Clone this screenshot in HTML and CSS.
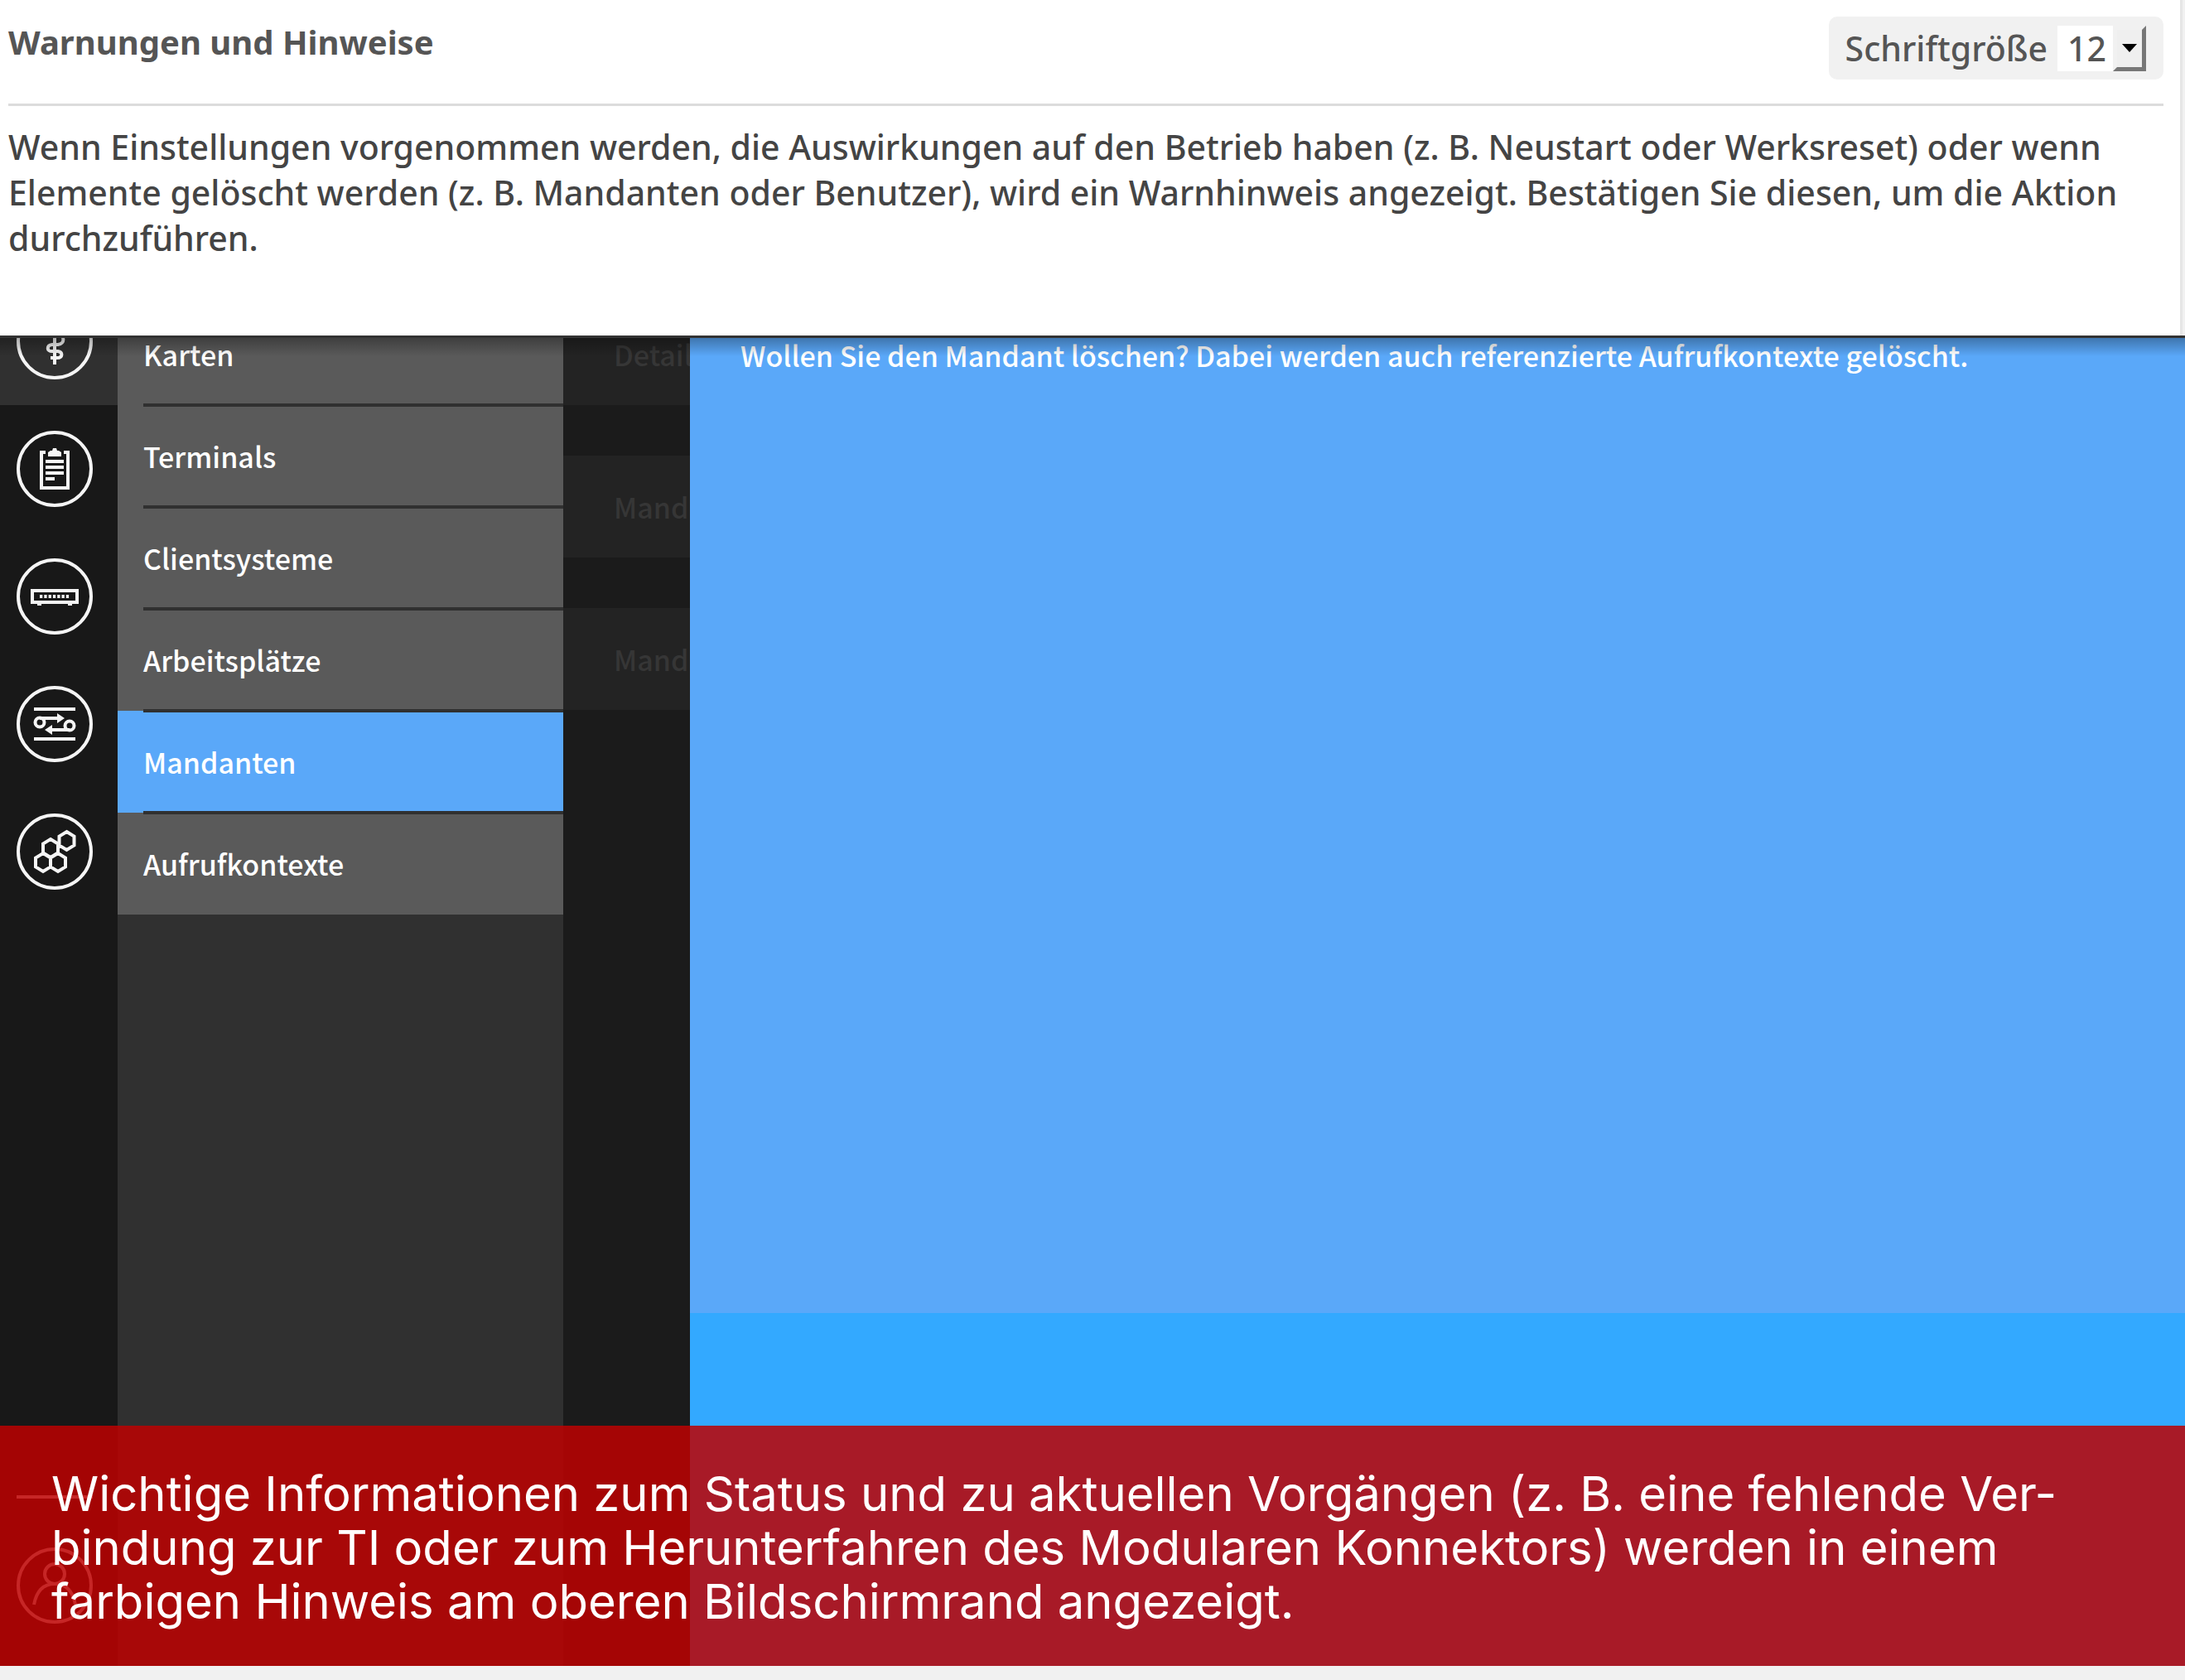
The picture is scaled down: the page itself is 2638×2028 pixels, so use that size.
FILE: index.html
```html
<!DOCTYPE html>
<html lang="de">
<head>
<meta charset="utf-8">
<title>Warnungen und Hinweise</title>
<link rel="stylesheet" href="styles.css">
</head>
<body>
<div class="page">
  <header class="intro">
    <div class="intro-head">
      <h1 class="intro-title">Warnungen und Hinweise</h1>
      <div class="font-size">
        <label for="font-size">Schriftgröße</label>
        <div class="picker">
          <select id="font-size" class="picker-select"><option>10</option><option selected>12</option><option>14</option></select>
          <span class="picker-arrow" aria-hidden="true"><svg width="18" height="10" viewBox="0 0 18 10"><path d="M0 0h18L9 10z"/></svg></span>
        </div>
      </div>
    </div>
    <p class="intro-text">Wenn Einstellungen vorgenommen werden, die Auswirkungen auf den Betrieb haben (z. B. Neustart oder Werksreset) oder wenn<br>Elemente gelöscht werden (z. B. Mandanten oder Benutzer), wird ein Warnhinweis angezeigt. Bestätigen Sie diesen, um die Aktion<br>durchzuführen.</p>
  </header>

  <main class="screen">
    <nav class="rail" aria-label="Bereiche">
      <a class="rail-item rail-item-active" href="#praxis" aria-label="Praxis"><svg class="icon" viewBox="-47 -47 94 94"><circle r="44"/><path d="M0-28V28M4-8C12-8 13 3 4 4H-3C-10 5-10 12-3 12H4C10 13 10 20 3 20H-5"/></svg></a>
      <a class="rail-item" href="#diagnose" aria-label="Diagnose"><svg class="icon" viewBox="-47 -47 94 94"><circle r="44"/><path d="M-11-20H-16V23H16V-20H11M-11-9H11M-11-2H11M-11 5H11M-11 12H0"/><path class="solid" d="M-8-15V-20L-5-22H-3L-2-25H2L3-22H5L8-20V-15z"/></svg></a>
      <a class="rail-item" href="#system" aria-label="System"><svg class="icon" viewBox="-47 -47 94 94"><circle r="44"/><path d="M-27-7H27V7H-27z"/><path d="M-18 0H19" stroke-dasharray="3.3 2"/><path class="solid" d="M-21 8h5v3h-5zM16 8h5v3h-5z"/></svg></a>
      <a class="rail-item" href="#netzwerk" aria-label="Netzwerk"><svg class="icon" viewBox="-47 -47 94 94"><circle r="44"/><path d="M-25-18H25M-25 18H25M-18-7H5M18 7H-5"/><circle cx="-18" cy="-2" r="5.5"/><circle cx="18" cy="2" r="5.5"/><path class="solid" d="M3-13L12-7L3-1zM-3 1L-12 7L-3 13z"/></svg></a>
      <a class="rail-item" href="#module" aria-label="Module"><svg class="icon" viewBox="-47 -47 94 94"><circle r="44"/><path d="M-14 2l9 5.500v11l-9 5.500l-9-5.500v-11zM4 2l9 5.500v11l-9 5.500l-9-5.500v-11zM-5-15l9 5.500v11l-9 5.500l-9-5.500v-11zM14.500-24l9 5.500v11l-9 5.500l-9-5.500v-11z"/></svg></a>
      <div class="rail-foot">
        <a class="rail-item" href="#konto" aria-label="Benutzerkonto"><svg class="icon" viewBox="-47 -47 94 94"><circle r="44"/><circle cy="-14" r="12"/><path d="M-25 23C-22 7-14-2 0-2S22 7 25 23"/></svg></a>
      </div>
    </nav>

    <nav class="menu" aria-label="Praxis">
      <a class="menu-item menu-item-cut" href="#karten">Karten</a>
      <a class="menu-item" href="#terminals">Terminals</a>
      <a class="menu-item" href="#clientsysteme">Clientsysteme</a>
      <a class="menu-item" href="#arbeitsplaetze">Arbeitsplätze</a>
      <a class="menu-item menu-item-active" href="#mandanten" aria-current="page">Mandanten</a>
      <a class="menu-item" href="#aufrufkontexte">Aufrufkontexte</a>
    </nav>

    <div class="details">
      <div class="details-row details-row-cut">Details</div>
      <div class="details-row">Mandant</div>
      <div class="details-row">Mandant</div>
    </div>

    <section class="dialog">
      <p class="dialog-text">Wollen Sie den Mandant löschen? Dabei werden auch referenzierte Aufrufkontexte gelöscht.</p>
      <div class="dialog-foot"></div>
    </section>

    <p class="notice">Wichtige Informationen zum Status und zu aktuellen Vorgängen (z. B. eine fehlende Ver-<br>bindung zur TI oder zum Herunterfahren des Modularen Konnektors) werden in einem<br>farbigen Hinweis am oberen Bildschirmrand angezeigt.</p>
  </main>
</div>
</body>
</html>
```
FILE: styles.css
```css
* { box-sizing: border-box; }

body {
  margin: 0;
  background: #f1f1f1;
  font-family: "Noto Sans", sans-serif;
}

.page {
  display: flex;
  flex-direction: column;
  min-height: 100vh;
  padding-bottom: 17px;
}

/* Intro */
.intro {
  margin-right: 3px;
  padding: 20px 20px 90px 10px;
  border-right: 3px solid #e6e6e6;
  background: #fff;
  color: #444;
}

.intro-head {
  display: flex;
  justify-content: space-between;
  align-items: flex-start;
  height: 108px;
  border-bottom: 3px solid #dcdcdc;
}

.intro-title {
  margin: 0;
  color: #555;
  font-size: 40px;
  line-height: 62px;
}

.font-size {
  display: flex;
  align-items: center;
  gap: 12px;
  height: 76px;
  padding: 0 21px 0 20px;
  border-radius: 10px;
  background: #f1f1f1;
  color: #555;
  font-size: 41px;
  font-weight: 500;
  line-height: 54px;
}

.picker {
  display: grid;
  width: 107px;
  height: 55px;
}

.picker-select {
  grid-area: 1 / 1;
  appearance: none;
  padding: 0 0 0 12px;
  border: 0;
  border-radius: 0;
  background: #fff;
  color: #555;
  font: inherit;
}

.picker-arrow {
  grid-area: 1 / 1;
  justify-self: end;
  display: grid;
  place-items: center;
  width: 40px;
  border: 5px solid #f1f1f1;
  border-right-color: #777;
  border-bottom-color: #777;
  background: #efefef;
  pointer-events: none;
}

.intro-text {
  margin: 0;
  padding-top: 22px;
  font-size: 41px;
  font-weight: 500;
  line-height: 55px;
  white-space: nowrap;
}

/* Application screen */
.screen {
  position: relative;
  flex: 1;
  display: grid;
  grid-template-columns: 142px 538px 153px 1fr;
  overflow: hidden;
  background: #1b1b1b;
  font-family: "Noto Sans CJK SC", sans-serif;
  font-size: 34px;
  font-weight: 500;
  line-height: 48px;
}

.screen::before {
  content: "";
  position: absolute;
  inset: 0 0 auto;
  height: 22px;
  border-top: 3px solid #333;
  background: linear-gradient(rgba(0, 0, 0, .3), rgba(0, 0, 0, 0));
  z-index: 1;
}

.rail {
  display: flex;
  flex-direction: column;
  background: #181818;
}

.rail-item {
  display: flex;
  align-items: center;
  height: 154px;
  padding-left: 19px;
}

.rail-item-active {
  align-items: flex-end;
  height: 84px;
  padding-bottom: 30px;
  overflow: hidden;
  background: #303030;
}

.icon {
  flex: none;
  width: 94px;
  height: 94px;
  fill: none;
  stroke: #f5f5f5;
  stroke-width: 4;
}

.icon .solid { fill: #f5f5f5; stroke: none; }

.rail-foot { margin: auto 30px 20px 0; }

.rail-foot::before {
  content: "";
  display: block;
  height: 4px;
  margin: 0 0 28px 20px;
  background: #f5f5f5;
}

.menu { background: #303030; }

.menu-item {
  position: relative;
  display: flex;
  align-items: center;
  height: 123px;
  padding-left: 31px;
  background: #5a5a5a;
  color: #fff;
  text-decoration: none;
}

.menu-item-cut,
.details-row-cut {
  height: 84px;
}

.menu-item-cut { padding-bottom: 39px; }

.menu-item-active { background: #5aa8f9; }

.menu-item + .menu-item::before {
  content: "";
  position: absolute;
  top: -2px;
  left: 31px;
  right: 0;
  height: 4px;
  background: #303030;
}

.details { overflow: hidden; }

.details-row {
  display: flex;
  align-items: center;
  height: 123px;
  margin-bottom: 61px;
  padding-left: 61px;
  background: #232323;
  color: #363636;
}

.details .details-row-cut {
  height: 84px;
  padding-bottom: 39px;
}

.dialog {
  display: flex;
  flex-direction: column;
  background: #5aa8f9;
  color: #fff;
}

.dialog-text {
  flex: 1;
  margin: 0;
  padding-left: 61px;
}

.dialog-foot {
  height: 426px;
  background: #33a9ff;
}

.notice {
  position: absolute;
  inset: auto 0 0;
  margin: 0;
  padding: 50px 62px 45px;
  background: rgba(189, 1, 1, .85);
  color: #fff;
  font-family: Inter, sans-serif;
  font-size: 58px;
  font-weight: 400;
  line-height: 65px;
  white-space: nowrap;
  z-index: 2;
}
```
